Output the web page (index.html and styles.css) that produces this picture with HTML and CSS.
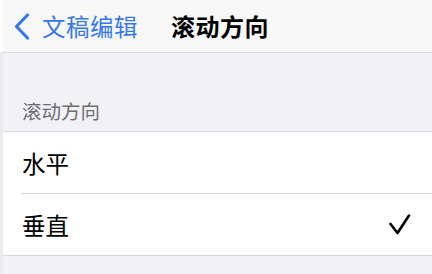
FILE: index.html
```html
<!DOCTYPE html>
<html lang="zh">
<head>
<meta charset="utf-8">
<link rel="stylesheet" href="styles.css">
</head>
<body>
<div class="screen">
  <header class="nav">
    <div class="back">
      <svg class="chev" width="16" height="27" viewBox="0 0 16 27"><path d="M13.5 2 L2.5 13.5 L13.5 25" fill="none" stroke="#3478f6" stroke-width="3.2" stroke-linecap="round" stroke-linejoin="round"/></svg>
      <span class="back-text">文稿编辑</span>
    </div>
    <div class="title">滚动方向</div>
  </header>
  <main class="content">
    <div class="section-header">滚动方向</div>
    <ul class="list">
      <li class="row"><span class="label">水平</span></li>
      <li class="row"><span class="label">垂直</span>
        <svg class="check" width="22" height="22" viewBox="0 0 22 22"><path d="M1.5 10 L8.5 19 L20 1.5" fill="none" stroke="#000" stroke-width="2.6" stroke-linecap="round" stroke-linejoin="round"/></svg>
      </li>
    </ul>
  </main>
</div>
</body>
</html>
```

FILE: styles.css
```css
* { box-sizing: border-box; }
html, body { margin: 0; padding: 0; }
body {
  width: 432px;
  height: 274px;
  overflow: hidden;
  font-family: "Noto Sans CJK SC", "Noto Sans", sans-serif;
  background: #f2f1f6;
}
.screen {
  display: flex;
  flex-direction: column;
  height: 274px;
}
.nav {
  height: 53px;
  flex: none;
  display: flex;
  align-items: center;
  background: #f8f8f9;
  border-bottom: 1px solid #dcdce0;
  border-left: 3px solid #fdfdfd;
  padding-left: 11px;
}
.back {
  display: flex;
  align-items: center;
  gap: 12px;
  color: #3478f6;
}
.chev { display: block; }
.back-text {
  font-size: 23.5px;
  line-height: 28px;
  letter-spacing: 0.5px;
}
.title {
  margin-left: 33px;
  font-size: 24px;
  line-height: 28px;
  font-weight: 700;
  color: #000;
  letter-spacing: 0.5px;
}
.content {
  flex: 1;
  border-left: 3px solid #ebebee;
  display: flex;
  flex-direction: column;
}
.section-header {
  height: 78px;
  display: flex;
  align-items: flex-end;
  padding-left: 19px;
  padding-bottom: 10px;
  font-size: 19.5px;
  line-height: 21px;
  color: #6d6d72;
}
.list {
  list-style: none;
  margin: 0;
  padding: 0;
  background: #fff;
  border-top: 1px solid #d9d9dd;
  border-bottom: 1px solid #d9d9dd;
}
.row {
  height: 61px;
  display: flex;
  align-items: center;
  justify-content: space-between;
  padding-left: 19px;
  padding-right: 21px;
  position: relative;
}
.row + .row::before {
  content: "";
  position: absolute;
  top: -1px;
  left: 18px;
  right: 0;
  height: 1px;
  background: #d9d9dd;
}
.row:first-child { margin-bottom: 1px; }
.label {
  font-size: 23.5px;
  line-height: 28px;
  color: #000;
}
.check { display: block; }
```
